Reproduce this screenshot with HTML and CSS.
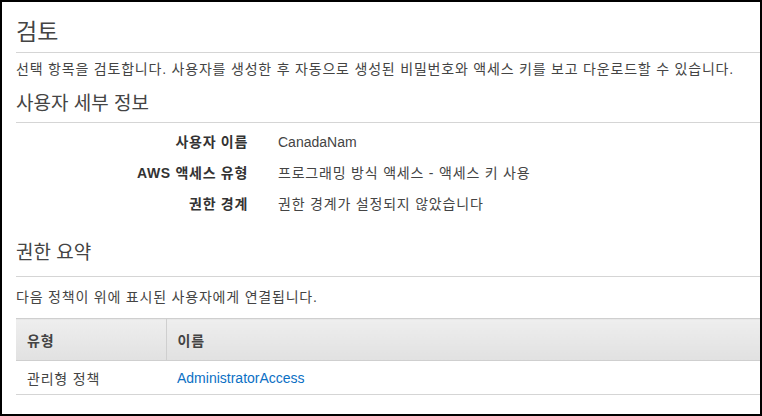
FILE: index.html
```html
<!DOCTYPE html>
<html lang="ko">
<head>
<meta charset="utf-8">
<link rel="stylesheet" href="styles.css">
</head>
<body>
<div class="frame">
  <h1 class="title">검토</h1>
  <p class="desc desc-top">선택 항목을 검토합니다. 사용자를 생성한 후 자동으로 생성된 비밀번호와 액세스 키를 보고 다운로드할 수 있습니다.</p>
  <h2 class="section">사용자 세부 정보</h2>
  <dl class="details">
    <dt>사용자 이름</dt><dd class="latin">CanadaNam</dd>
    <dt>AWS 액세스 유형</dt><dd>프로그래밍 방식 액세스 - 액세스 키 사용</dd>
    <dt>권한 경계</dt><dd>권한 경계가 설정되지 않았습니다</dd>
  </dl>
  <h2 class="section section-perm">권한 요약</h2>
  <p class="desc desc-perm">다음 정책이 위에 표시된 사용자에게 연결됩니다.</p>
  <table class="policy">
    <thead>
      <tr><th class="col-type">유형</th><th>이름</th></tr>
    </thead>
    <tbody>
      <tr><td>관리형 정책</td><td><a class="link latin" href="#">AdministratorAccess</a></td></tr>
    </tbody>
  </table>
</div>
</body>
</html>
```
FILE: styles.css
```css
* { box-sizing: border-box; }
html, body { margin: 0; padding: 0; background: #fff; }
body {
  font-family: "Liberation Sans", "Noto Sans CJK KR", Arial, sans-serif;
  color: #444;
}
.frame {
  width: 762px;
  height: 416px;
  border: 2px solid #000;
  padding: 0 0 0 14px;
  overflow: hidden;
}
.title {
  margin: 0;
  padding: 15px 0 5px 0;
  font-size: 23px;
  line-height: 30px;
  font-weight: normal;
  color: #444;
  border-bottom: 1px solid #d5d5d5;
}
.desc {
  margin: 0;
  font-size: 14px;
  line-height: 20px;
  letter-spacing: 0.8px;
  color: #444;
}
.desc-top { margin-top: 6px; }
.section {
  margin: 12px 0 0 0;
  padding-bottom: 5px;
  font-size: 19px;
  line-height: 26px;
  font-weight: normal;
  color: #444;
  border-bottom: 1px solid #d5d5d5;
}
.details {
  display: grid;
  grid-template-columns: 232px 1fr;
  column-gap: 30px;
  row-gap: 11px;
  margin: 9px 0 0 0;
  font-size: 14px;
  line-height: 20px;
  letter-spacing: 0.8px;
}
.details dt {
  text-align: right;
  font-weight: bold;
  color: #333;
  letter-spacing: 0.7px;
}
.details dd { margin: 0; color: #444; }
.latin { letter-spacing: 0; }
.section-perm { margin-top: 26px; padding-bottom: 10px; }
.desc-perm { margin-top: 10px; }
.policy {
  margin-top: 11px;
  width: 100%;
  border-collapse: collapse;
  font-size: 14px;
  letter-spacing: 0.8px;
}
.policy th {
  height: 42px;
  padding: 0 11px;
  text-align: left;
  font-weight: bold;
  color: #444;
  background: linear-gradient(#eeeeee, #e1e1e1);
  border-top: 1px solid #cfcfcf;
  border-bottom: 1px solid #cfcfcf;
}
.policy th.col-type { width: 150px; border-right: 1px solid #cfcfcf; }
.policy td {
  height: 34px;
  padding: 0 10px 0 11px;
  color: #444;
  border-bottom: 1px solid #d5d5d5;
}
.link { color: #0b70c4; text-decoration: none; }
```
